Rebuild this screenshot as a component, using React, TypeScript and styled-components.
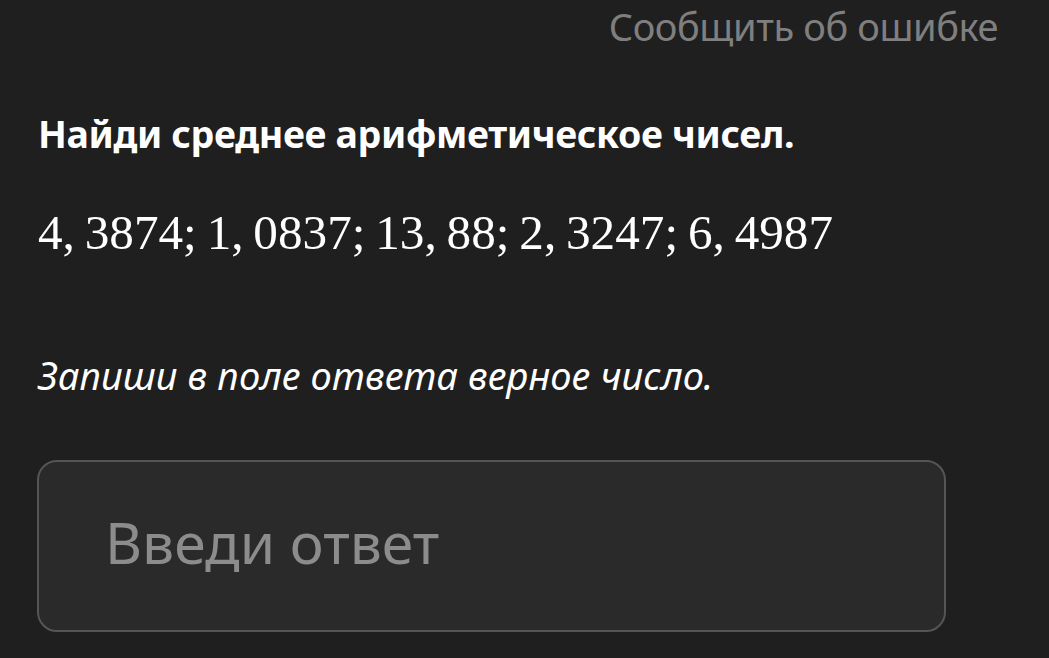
import React from "react";
import styled, { createGlobalStyle } from "styled-components";

const Global = createGlobalStyle`
  html, body { margin: 0; padding: 0; background: #1f1f1f; }
  body { font-family: "Noto Sans", "Open Sans", sans-serif; }
`;

const Page = styled.div`
  width: 1049px;
  height: 658px;
  box-sizing: border-box;
  padding: 1px 51px 0 37px;
  display: flex;
  flex-direction: column;
  background: #1f1f1f;
  overflow: hidden;
`;

const TopBar = styled.div`
  display: flex;
  justify-content: flex-end;
`;

const ReportLink = styled.a`
  font-family: "Noto Sans", sans-serif;
  font-size: 38px;
  line-height: 50px;
  color: #7f7f7f;
  letter-spacing: -0.4px;
  text-decoration: none;
`;

const Title = styled.h1`
  margin: 59px 0 0 1px;
  font-family: "Noto Sans", sans-serif;
  font-weight: 700;
  font-size: 37.5px;
  line-height: 48px;
  color: #ffffff;
  letter-spacing: -0.35px;
`;

const MathLine = styled.div`
  margin: 45px 0 0 1px;
  font-family: "Liberation Serif", serif;
  font-size: 49.2px;
  line-height: 60px;
  color: #ffffff;
  white-space: nowrap;
`;

const Hint = styled.p`
  margin: 87px 0 0 1px;
  font-family: "Noto Sans", sans-serif;
  font-style: italic;
  font-size: 38px;
  line-height: 50px;
  color: #ffffff;
  letter-spacing: 0.1px;
`;

const AnswerBox = styled.div`
  margin-top: 60px;
  width: 909px;
  height: 172px;
  box-sizing: border-box;
  border: 2px solid #555555;
  border-radius: 20px;
  background: #2a2a2a;
  display: flex;
  align-items: center;
  padding: 0 0 8px 66px;
`;

const AnswerInput = styled.input`
  flex: 1;
  background: transparent;
  border: none;
  outline: none;
  font-family: "Noto Sans", sans-serif;
  font-size: 57px;
  color: #ffffff;
  padding: 0;
  &::placeholder { color: #8c8c8c; }
`;

export default function App() {
  return (
    <>
      <Global />
      <Page>
        <TopBar>
          <ReportLink href="#">Сообщить об ошибке</ReportLink>
        </TopBar>
        <Title>Найди среднее арифметическое чисел.</Title>
        <MathLine>4,&#8201;3874;&#8201;1,&#8201;0837;&#8201;13,&#8201;88;&#8201;2,&#8201;3247;&#8201;6,&#8201;4987</MathLine>
        <Hint>Запиши в поле ответа верное число.</Hint>
        <AnswerBox>
          <AnswerInput placeholder="Введи ответ" />
        </AnswerBox>
      </Page>
    </>
  );
}
